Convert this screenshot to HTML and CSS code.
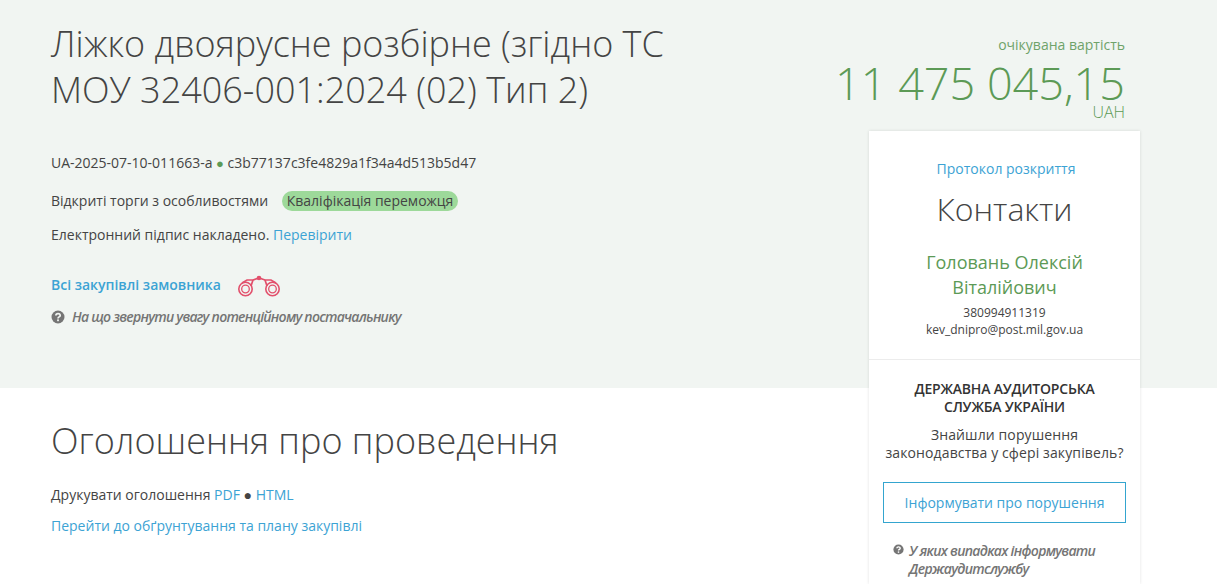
FILE: index.html
```html
<!DOCTYPE html>
<html lang="uk">
<head>
    <meta charset="UTF-8">
    <meta name="viewport" content="width=device-width, initial-scale=1.0">
    <title>Ліжко двоярусне розбірне</title>
    <link rel="stylesheet" href="styles.css">
</head>
<body>

    <div class="page">
        <div class="main">
            <div class="head">
                <h1>Ліжко двоярусне розбірне (згідно ТС МОУ 32406-001:2024 (02) Тип 2)</h1>
                <div class="line line-id">UA-2025-07-10-011663-a <span class="dot">●</span> c3b77137c3fe4829a1f34a4d513b5d47</div>
                <div class="line line-type">Відкриті торги з особливостями <span class="status">Кваліфікація переможця</span></div>
                <div class="line line-sign">Електронний підпис накладено. <a href="#">Перевірити</a></div>
                <div class="buyer">
                    <a href="#">Всі закупівлі замовника</a>
                    <svg class="binoculars" width="42" height="24" viewBox="0 0 42 24" fill="none" stroke="#e2506c">
                        <circle cx="7.5" cy="14" r="6.7" stroke-width="1.6"/>
                        <circle cx="7.5" cy="14" r="3.8" stroke-width="1.3"/>
                        <circle cx="34.5" cy="14" r="6.7" stroke-width="1.6"/>
                        <circle cx="34.5" cy="14" r="3.8" stroke-width="1.3"/>
                        <path d="M4 8 L9 5 L15 5 L21 3 L27 5 L33 5 L38 8" stroke-width="1.7"/>
                        <path d="M13 11 L15 5 M29 11 L27 5" stroke-width="1.7"/>
                        <circle cx="21" cy="3" r="2.3" fill="#e2506c" stroke="none"/>
                    </svg>
                </div>
                <div class="hint">
                    <svg class="hint-icon" width="14" height="14" viewBox="0 0 14 14">
                        <circle cx="7" cy="7" r="6.5" fill="#757575"/>
                        <path d="M4.9 5.5 C4.9 3 9.2 3 9.2 5.4 C9.2 7 7 6.8 7 8.4" fill="none" stroke="#f1f5f2" stroke-width="1.7"/>
                        <rect x="6.1" y="9.4" width="1.8" height="1.8" fill="#f1f5f2"/>
                    </svg>
                    <em>На що звернути увагу потенційному постачальнику</em>
                </div>
            </div>
            <div class="section">
                <h2>Оголошення про проведення</h2>
                <div class="line line-print">Друкувати оголошення <a href="#">PDF</a> ● <a href="#">HTML</a></div>
                <div class="line"><a href="#">Перейти до обґрунтування та плану закупівлі</a></div>
            </div>
        </div>

        <div class="side">
            <div class="price">
                <div class="price-label">очікувана вартість</div>
                <div class="price-value">11 475 045,15</div>
                <div class="price-cur">UAH</div>
            </div>
            <div class="card">
                <div class="card-top">
                    <a href="#">Протокол розкриття</a>
                    <div class="card-title">Контакти</div>
                    <div class="contact-name">Головань Олексій Віталійович</div>
                    <div class="contact-info">380994911319</div>
                    <div class="contact-info">kev_dnipro@post.mil.gov.ua</div>
                </div>
                <div class="card-bottom">
                    <div class="audit-title">ДЕРЖАВНА АУДИТОРСЬКА СЛУЖБА УКРАЇНИ</div>
                    <div class="audit-text">Знайшли порушення законодавства у сфері закупівель?</div>
                    <a href="#" class="btn">Інформувати про порушення</a>
                    <div class="audit-hint">
                        <svg class="audit-icon" width="11" height="11" viewBox="0 0 14 14">
                            <circle cx="7" cy="7" r="6.5" fill="#757575"/>
                            <path d="M4.9 5.5 C4.9 3 9.2 3 9.2 5.4 C9.2 7 7 6.8 7 8.4" fill="none" stroke="#fff" stroke-width="1.7"/>
                            <rect x="6.1" y="9.4" width="1.8" height="1.8" fill="#fff"/>
                        </svg>
                        <em>У яких випадках інформувати Держаудитслужбу</em>
                    </div>
                </div>
            </div>
        </div>
    </div>

</body>
</html>
```

FILE: styles.css
```css
html, body {
    margin: 0;
    padding: 0;
    height: 584px;
    overflow: hidden;
}
body {
    font-family: "Open Sans", Arial, sans-serif;
    font-size: 14px;
    color: #444;
    background: #fff;
}
a {
    color: #3ca3d4;
    text-decoration: none;
}
.page {
    display: flex;
    background: linear-gradient(to bottom, #f1f5f2 388px, #fff 388px);
    height: 584px;
}
.main {
    width: 869px;
    box-sizing: border-box;
    padding-left: 51px;
}
.head {
    height: 388px;
    padding-top: 21px;
    box-sizing: border-box;
}
h1 {
    font-size: 36px;
    font-weight: 300;
    line-height: 46px;
    margin: 0 0 40px;
    width: 660px;
    color: #444;
}
h2 {
    font-size: 36px;
    font-weight: 300;
    line-height: 46px;
    margin: 0 0 21px;
    color: #444;
}
.line {
    line-height: 20px;
}
.line-id {
    margin-bottom: 18px;
}
.line-type {
    margin-bottom: 14px;
}
.dot {
    color: #5c9a56;
    font-size: 13px;
}
.status {
    display: inline-block;
    background: #9dd99a;
    border-radius: 10px;
    padding: 0 5px;
    margin-left: 10px;
}
.buyer {
    display: flex;
    align-items: center;
    margin-top: 25px;
    height: 28px;
}
.buyer a {
    font-weight: 600;
}
.binoculars {
    margin-left: 17px;
    margin-top: 6px;
}
.hint {
    display: flex;
    align-items: center;
    margin-top: 9px;
    color: #757575;
    font-weight: 600;
    letter-spacing: -0.75px;
}
.hint-icon {
    margin-right: 7px;
}
.section {
    padding-top: 30px;
}
.line-print {
    margin-bottom: 11px;
}
.side {
    width: 271px;
    display: flex;
    flex-direction: column;
}
.price {
    text-align: right;
    padding-right: 15px;
    margin-left: -60px;
    height: 131px;
    box-sizing: border-box;
    padding-top: 35px;
    color: #5c9a56;
}
.price-label {
    line-height: 20px;
    color: #6fa36a;
}
.price-value {
    font-size: 45px;
    font-weight: 300;
    line-height: 46px;
    margin-top: 5px;
    white-space: nowrap;
}
.price-cur {
    font-size: 16px;
    font-weight: 300;
    line-height: 12px;
}
.card {
    flex: 1;
    min-height: 0;
    background: #fff;
    box-shadow: 0 0 3px rgba(0, 0, 0, 0.12);
    text-align: center;
}
.card-top {
    padding: 28px 15px 21px;
    border-bottom: 1px solid #ececec;
}
.card-top a {
    display: block;
    line-height: 20px;
    margin-left: 3px;
}
.card-title {
    font-size: 32px;
    font-weight: 300;
    line-height: 44px;
    margin-top: 8px;
}
.contact-name {
    font-size: 18px;
    line-height: 25px;
    color: #5c9a56;
    margin-top: 19px;
    margin-bottom: 4px;
}
.contact-info {
    font-size: 12px;
    line-height: 17px;
}
.card-bottom {
    padding: 20px 14px 0;
}
.audit-title {
    font-weight: 600;
    line-height: 18px;
    color: #333;
    padding: 0 15px;
    letter-spacing: -0.2px;
}
.audit-text {
    line-height: 18px;
    margin-top: 10px;
    letter-spacing: 0.12px;
}
.btn {
    display: block;
    border: 1px solid #34a5cf;
    line-height: 39px;
    margin-top: 20px;
}
.audit-hint {
    display: flex;
    text-align: left;
    margin: 19px 0 0 10px;
    color: #757575;
    font-weight: 600;
    line-height: 18px;
    letter-spacing: -0.7px;
}
.audit-icon {
    flex: none;
    margin: 2px 5px 0 0;
}
```
